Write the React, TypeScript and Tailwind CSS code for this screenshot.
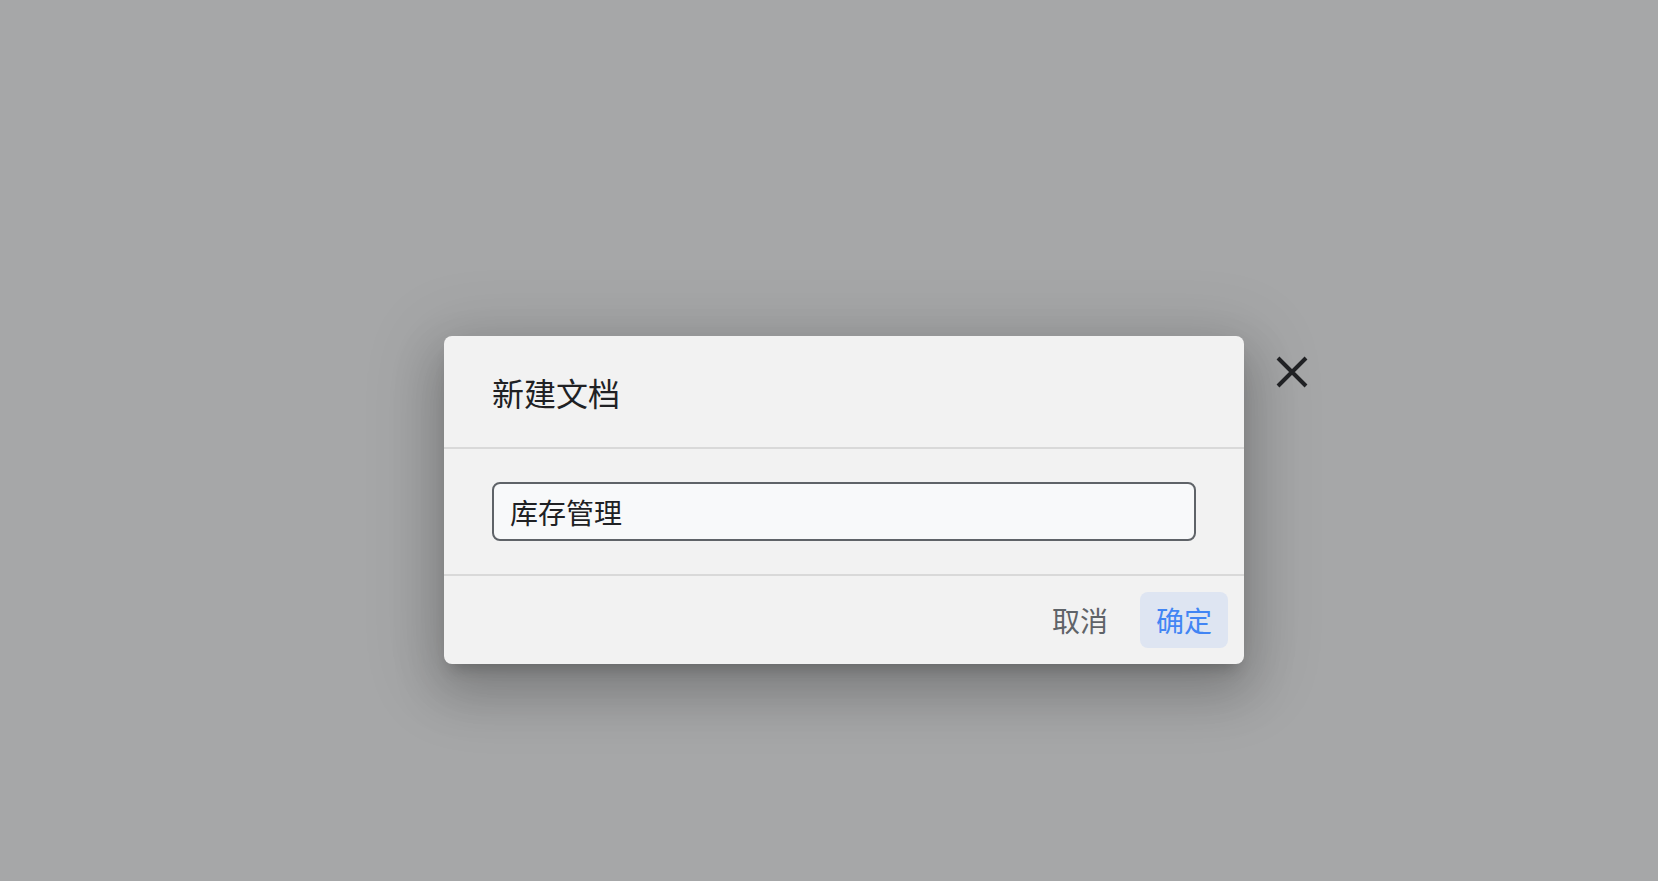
import React from "react";

export default function App() {
  return (
    <div
      className="w-[1658px] h-[881px] bg-[#a6a7a8] overflow-hidden"
      style={{ fontFamily: '"Noto Sans CJK SC", "Noto Sans", sans-serif' }}
    >
      <div className="flex items-start pt-[336px] pl-[444px]">
        <div className="w-[800px] bg-[#f2f2f2] rounded-lg shadow-[0_24px_48px_6px_rgba(0,0,0,0.16),0_12px_70px_16px_rgba(0,0,0,0.12),0_11px_15px_-7px_rgba(0,0,0,0.2)]">
          <div className="h-[113px] px-12 flex items-center border-b-2 border-[#d9d9d9]">
            <h2 className="text-[32px] leading-none text-[#202124]">新建文档</h2>
          </div>
          <div className="px-12 pt-[33px] pb-[33px] border-b-2 border-[#d9d9d9]">
            <input
              className="w-full h-[59px] rounded-lg border-2 border-[#5f6368] bg-[#f8f9fa] px-4 text-[28px] text-[#202124] outline-none"
              style={{ fontFamily: '"Noto Sans CJK SC", "Noto Sans", sans-serif' }}
              defaultValue="库存管理"
            />
          </div>
          <div className="flex justify-end items-center gap-4 px-4 py-4">
            <button className="h-14 px-4 rounded-lg text-[28px] text-[#5f6368] flex items-center">
              取消
            </button>
            <button className="h-14 px-4 rounded-lg bg-[#dee5f2] text-[28px] text-[#4285f4] flex items-center">
              确定
            </button>
          </div>
        </div>
        <button className="ml-6 mt-3 w-12 h-12 flex items-center justify-center">
          <svg width="32" height="32" viewBox="0 0 32 32">
            <path d="M2 2 L30 30 M30 2 L2 30" stroke="#202124" strokeWidth="4" fill="none" />
          </svg>
        </button>
      </div>
    </div>
  );
}
